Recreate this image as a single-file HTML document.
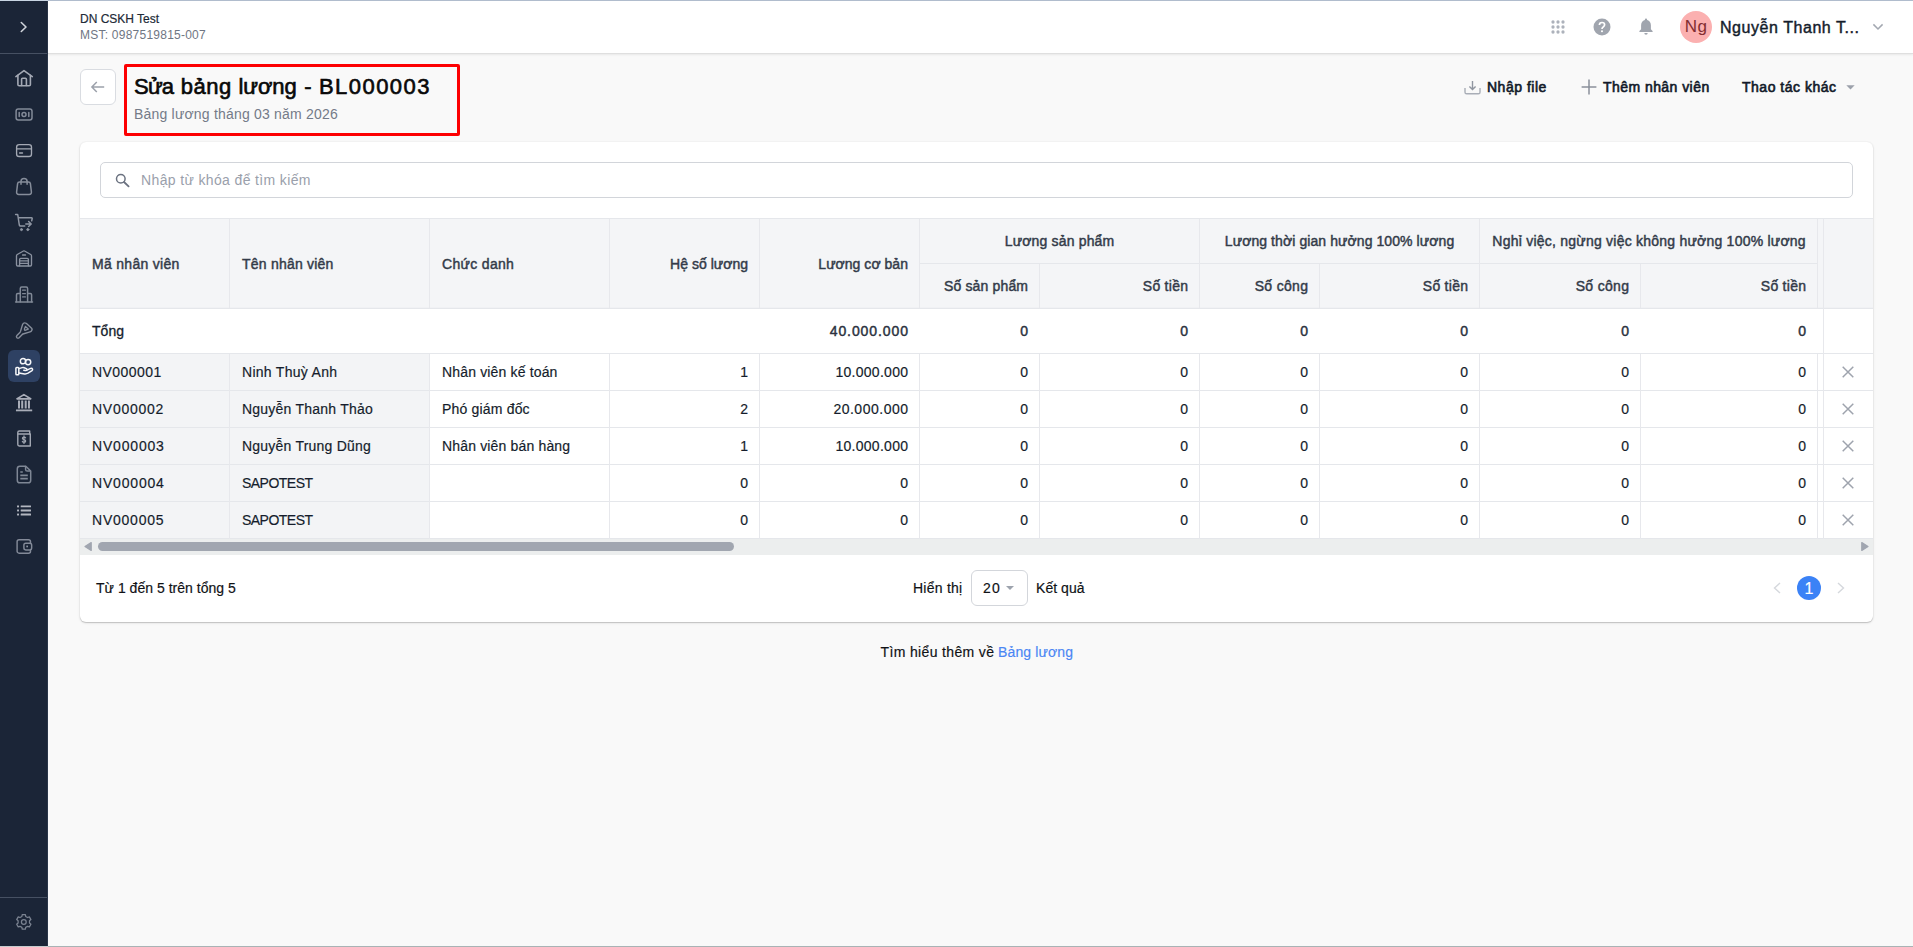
<!DOCTYPE html>
<html lang="vi">
<head>
<meta charset="utf-8">
<title>Sửa bảng lương - BL000003</title>
<style>
*{box-sizing:border-box;margin:0;padding:0}
html,body{width:1913px;height:947px;overflow:hidden;background:#f9f9f9;font-family:"Liberation Sans",sans-serif;color:#1f2937;font-size:14px}
#app{position:relative;width:1913px;height:947px;overflow:hidden}
.abs{position:absolute}
.t{position:absolute;white-space:nowrap;line-height:20px;height:20px}
.tr{text-align:right}
.tc{text-align:center}
#topline{left:0;top:0;width:1913px;height:1px;background:linear-gradient(90deg,#c9d5e3 0,#c9d5e3 48px,#b0bccd 48px)}
#botline{left:0;top:946px;width:1913px;height:1px;background:linear-gradient(90deg,#c5ccce 0,#c5ccce 48px,#a9b3b5 48px)}
#side{left:0;top:0;width:48px;height:947px;background:#1b2537;border-right:1px solid #2a3649}
#side .dv{position:absolute;left:0;width:47px;height:1px;background:#465062}
#side svg{position:absolute;left:15px;width:18px;height:18px;fill:none;stroke:#9aa1ad;stroke-width:1.5;stroke-linecap:round;stroke-linejoin:round;overflow:visible}
#active{position:absolute;left:8px;top:350px;width:32px;height:32px;border-radius:6px;background:#2e4163}
#hdr{left:48px;top:0;width:1865px;height:54px;background:#fff;border-bottom:1px solid #dfdfdf;box-shadow:0 1px 2px rgba(0,0,0,.07)}
#card{left:80px;top:142px;width:1793px;height:480px;background:#fff;border-radius:6px;box-shadow:0 1px 1px rgba(0,0,0,.15),0 1px 3px rgba(0,0,0,.1),0 0 2px rgba(0,0,0,.07)}
#search{left:100px;top:162px;width:1753px;height:36px;border:1px solid #d2d5da;border-radius:5px;background:#fff}
#back{left:80px;top:69px;width:36px;height:36px;border:1px solid #d9dce1;border-radius:6px;background:#fff}
#redbox{left:124px;top:64px;width:336px;height:72px;border:3px solid #fd0002;border-radius:2px}
.bg{position:absolute;background:#f3f4f6}
.hl{position:absolute;height:1px;background:#e5e7eb}
.vl{position:absolute;width:1px;background:#e7e8ec}
.hd{font-weight:400;color:#333b49;font-size:14px;-webkit-text-stroke:.45px #333b49}
.c{font-size:14px;color:#151d2c;-webkit-text-stroke:.18px #151d2c}
.b{font-weight:400;color:#2b3240;-webkit-text-stroke:.45px #2b3240}
.ic{position:absolute;overflow:visible}
</style>
</head>
<body>
<div id="app">
<div id="side" class="abs"><div class="dv" style="top:53px"></div><div class="dv" style="top:897px"></div><div id="active"></div><svg viewBox="0 0 18 18" style="top:18px;stroke:#cfd3da;stroke-width:1.6"><path d="M6.3 4.5 L11 9 L6.3 13.5"/></svg>
<svg viewBox="0 0 18 18" style="top:68.5px;stroke:#a4a9b4;stroke-width:1.6"><path d="M0.9 7.6 L9 1.6 L17.3 7.6"/><path d="M2.9 6.4 V15.4 Q2.9 16.7 4.2 16.7 H14.1 Q15.4 16.7 15.4 15.4 V6.4"/><path d="M6.6 16.5 V10.3 Q6.6 9.3 7.6 9.3 H10.4 Q11.4 9.3 11.4 10.3 V16.5"/></svg>
<svg viewBox="0 0 18 18" style="top:104.5px;stroke:#838a98;stroke-width:1.5"><rect x="1.1" y="4" width="15.9" height="11" rx="2.2"/><circle cx="9" cy="9.5" r="2"/><path d="M4.2 7.6 V11.4 M13.8 7.6 V11.4"/></svg>
<svg viewBox="0 0 18 18" style="top:140.5px;stroke:#a4a9b4;stroke-width:1.35"><rect x="1.6" y="3.6" width="14.9" height="11.9" rx="2.6"/><path d="M1.8 7.9 H16.3"/><path d="M4.6 12 H7.5"/></svg>
<svg viewBox="0 0 18 18" style="top:176.5px;stroke:#868d9a;stroke-width:1.5"><path d="M4.6 4.9 H13.4 Q15.2 4.9 15.4 6.7 L16.4 15 Q16.6 17.4 14.2 17.4 H3.8 Q1.4 17.4 1.6 15 L2.6 6.7 Q2.8 4.9 4.6 4.9 Z"/><path d="M6 7.2 V4.3 Q6 1.4 9 1.4 Q12.1 1.4 12.1 4.3 V7.2"/></svg>
<svg viewBox="0 0 18 18" style="top:212.5px;stroke:#8e95a2;stroke-width:1.5"><path d="M0.6 1.5 H2.4 Q2.7 1.5 2.8 2 L4.3 12 Q4.5 13 5.5 13 H9.7"/><path d="M3.8 4.8 H16.6 Q17.3 4.8 17.2 5.5 L16.7 7.8"/><path d="M10.8 11 H16 M13.6 8.5 L16.2 11 L13.6 13.5"/><circle cx="6.5" cy="16.6" r="1.05" fill="#8e95a2" stroke-width="1"/><circle cx="12.8" cy="16.6" r="1.05" fill="#8e95a2" stroke-width="1"/></svg>
<svg viewBox="0 0 18 18" style="top:248.5px;stroke:#8b92a0;stroke-width:1.35"><path d="M1.5 6.9 Q1.5 6 2.3 5.5 L8.4 2 Q9 1.7 9.6 2 L15.7 5.5 Q16.5 6 16.5 6.9 V15.8 Q16.5 17 15.3 17 H2.7 Q1.5 17 1.5 15.8 Z"/><path d="M7.6 6 H10.5"/><path d="M4.6 16.8 V10.4 Q4.6 9.3 5.7 9.3 H12.3 Q13.4 9.3 13.4 10.4 V16.8"/><path d="M4.8 11.9 H13.2 M4.8 14.4 H13.2" stroke-width="1.2"/></svg>
<svg viewBox="0 0 18 18" style="top:284.5px;stroke:#818997;stroke-width:1.5"><path d="M0.6 17 H17.5"/><path d="M5.3 16.8 V3.4 Q5.3 2 6.7 2 H11.2 Q12.6 2 12.6 3.4 V16.8"/><path d="M5.1 8.4 H2.8 Q1.5 8.4 1.5 9.7 V16.8 M12.8 8.4 H15.3 Q16.6 8.4 16.6 9.7 V16.8"/><path d="M7.6 5.2 H10.4 M7.6 8.7 H10.4 M7.6 11.9 H10.4" stroke-width="1.3"/></svg>
<svg viewBox="0 0 18 18" style="top:320.5px;stroke:#868d9a;stroke-width:1.4"><path d="M7.6 3.4 Q8.2 1.8 10 1.9 Q10.9 1.9 11.5 2.6 L16.6 7.3 Q17.8 8.6 16.2 10.2 Q15.8 10.6 15 10.8 L8 13 Q7.5 13.2 7 13.7 L4.1 16.7 Q3 17.6 1.9 16.7 Q0.9 15.7 1.9 14.5 L4.9 11.4 Q5.3 11 5.5 10.4 Z"/><path d="M10.4 5.4 L13.3 8.1 L10 9.4 Q9.3 9 9.4 8 Z" stroke-width="1.3"/></svg>
<svg viewBox="0 0 18 18" style="top:356.5px;stroke:#f6f7f9;stroke-width:1.5"><circle cx="8" cy="4.2" r="2.65"/><circle cx="13.1" cy="5.1" r="2.65"/><rect x="0.9" y="10.5" width="2.9" height="7.2" rx="0.8"/><path d="M3.9 11.6 L7.2 10.6 Q8.2 10.3 9.2 10.7 L11.4 11.6 Q12.4 12.1 11.9 13 Q11.5 13.7 10.4 13.6 L8.8 13.3"/><path d="M11.9 13.1 L15.7 11.4 Q17 11 17.5 12 Q17.9 12.9 17 13.6 L13 16.2 Q11.4 17.1 9.6 16.9 L3.9 16"/></svg>
<svg viewBox="0 0 18 18" style="top:392.5px;stroke:#a9adb8"><path d="M2.2 5.7 L8.9 1.6 L15.6 5.7 Z" stroke-width="1.6"/><path d="M1.6 5.8 H16.2" stroke-width="1.5" stroke-linecap="butt"/><path d="M0.95 17.4 H17.2" stroke-width="1.8" stroke-linecap="butt"/><path d="M4 7.4 V15.5 M7.2 7.4 V15.5 M10.7 7.4 V15.5 M13.95 7.4 V15.5" stroke-width="2" stroke-linecap="butt"/></svg>
<svg viewBox="0 0 18 18" style="top:428.5px;stroke:#a2a7b2;stroke-width:1.4"><path d="M2.8 3.6 Q2.8 2 4.4 2 H14.7 V5 H15.3 V17 H4.2 Q2.8 17 2.8 15.6 Z"/><path d="M3 5 H15" stroke-width="1.3"/><path d="M10.6 8.9 Q10.4 8 9 8 Q7.4 8 7.4 9.3 Q7.4 10.3 9 10.6 Q10.7 10.9 10.7 12.1 Q10.7 13.4 9 13.4 Q7.4 13.4 7.3 12.3 M9 6.9 V14.5" stroke-width="1.2"/></svg>
<svg viewBox="0 0 18 18" style="top:464.5px;stroke:#7f8795;stroke-width:1.5"><path d="M2.3 3.8 Q2.3 1.2 4.9 1.2 H10.8 L15.7 6 V15.2 Q15.7 17.8 13.1 17.8 H4.9 Q2.3 17.8 2.3 15.2 Z"/><path d="M10.6 1.6 V4.4 Q10.6 6 12.2 6 H15.2"/><path d="M5.3 7 H7.8 M5.3 10.3 H12.8 M5.3 13.6 H12.8" stroke-width="1.7" stroke-linecap="butt"/></svg>
<svg viewBox="0 0 18 18" style="top:500.5px;"><g fill="#b3b7c0" stroke="none"><rect x="2.05" y="4.5" width="1.95" height="1.85"/><rect x="2.05" y="8.55" width="1.95" height="1.85"/><rect x="2.05" y="12.6" width="1.95" height="1.85"/><rect x="5.7" y="4.5" width="10.3" height="1.85" rx=".3"/><rect x="5.7" y="8.55" width="10.3" height="1.85" rx=".3"/><rect x="5.7" y="12.6" width="10.3" height="1.85" rx=".3"/></g></svg>
<svg viewBox="0 0 18 18" style="top:536.5px;stroke:#838a98;stroke-width:1.45"><rect x="2.1" y="2.8" width="13.4" height="13.35" rx="2"/><path d="M16.65 8 Q16.65 6.2 14.85 6.2 H10.7 Q8.9 6.2 8.9 8 V11.1 Q8.9 12.9 10.7 12.9 H14.85 Q16.65 12.9 16.65 11.1 Z" fill="#1b2537"/><rect x="11.3" y="8.6" width="1.7" height="1.7" fill="#8e95a2" stroke="none"/></svg>
<svg viewBox="0 0 18 18" style="top:913px;stroke:#7b8391;stroke-width:1.25"><path d="M7.24 1.56 L10.36 1.56 L10.71 3.42 L12.59 4.51 L14.37 3.88 L15.93 6.58 L14.50 7.81 L14.50 9.99 L15.93 11.22 L14.37 13.92 L12.59 13.29 L10.71 14.38 L10.36 16.24 L7.24 16.24 L6.89 14.38 L5.01 13.29 L3.23 13.92 L1.67 11.22 L3.10 9.99 L3.10 7.81 L1.67 6.58 L3.23 3.88 L5.01 4.51 L6.89 3.42 Z"/><circle cx="8.8" cy="8.9" r="2.4"/></svg>
</div>
<div id="hdr" class="abs"></div>
<div class="t c" style="left:80px;top:9px;letter-spacing:-0.004px;font-size:12px;color:#222b38">DN CSKH Test</div>
<div class="t c" style="left:80px;top:25px;letter-spacing:0.237px;font-size:12px;color:#6f7683;-webkit-text-stroke:0">MST: 0987519815-007</div>
<div class="t c" style="left:1720px;top:18px;letter-spacing:0.552px;font-size:16px;color:#141c2b;-webkit-text-stroke:.42px #141c2b">Nguyễn Thanh T...</div>
<div id="back" class="abs"></div>
<div id="redbox" class="abs"></div>
<div class="t c" style="left:134.0px;top:77px;letter-spacing:-0.77px;font-size:22px;color:#0a0a0a;line-height:28px;height:28px;top:73.4px;-webkit-text-stroke:.62px #050505;">Sửa</div>
<div class="t c" style="left:180.8px;top:77px;letter-spacing:0.516px;font-size:22px;color:#0a0a0a;line-height:28px;height:28px;top:73.4px;-webkit-text-stroke:.62px #050505;">bảng</div>
<div class="t c" style="left:238.4px;top:77px;letter-spacing:-0.054px;font-size:22px;color:#0a0a0a;line-height:28px;height:28px;top:73.4px;-webkit-text-stroke:.62px #050505;">lương</div>
<div class="t c" style="left:304.2px;top:77px;font-size:22px;color:#0a0a0a;line-height:28px;height:28px;top:73.4px;-webkit-text-stroke:.62px #050505;">-</div>
<div class="t c" style="left:319.0px;top:77px;letter-spacing:1.439px;font-size:22px;color:#0a0a0a;line-height:28px;height:28px;top:73.4px;-webkit-text-stroke:.62px #050505;">BL000003</div>
<div class="t c" style="left:134px;top:104px;letter-spacing:0.197px;color:#747b88;-webkit-text-stroke:0">Bảng lương tháng 03 năm 2026</div>
<div class="t hd" style="left:1487px;top:77px;letter-spacing:0.504px;color:#121a29;-webkit-text-stroke:.62px #121a29">Nhập file</div>
<div class="t hd" style="left:1603px;top:77px;letter-spacing:0.446px;color:#121a29;-webkit-text-stroke:.62px #121a29">Thêm nhân viên</div>
<div class="t hd" style="left:1742px;top:77px;letter-spacing:0.505px;color:#121a29;-webkit-text-stroke:.62px #121a29">Thao tác khác</div>
<div id="card" class="abs"></div>
<div id="search" class="abs"></div>
<div class="t c" style="left:141px;top:170px;letter-spacing:0.365px;color:#9aa0ab;-webkit-text-stroke:0">Nhập từ khóa để tìm kiếm</div>
<div class="bg" style="left:80px;top:218px;width:1793px;height:91px;background:#f4f5f7"></div>
<div class="bg" style="left:80px;top:354px;width:349px;height:185px"></div>
<div class="abs" style="left:80px;top:539px;width:1793px;height:16px;background:#eceeee"></div>
<div class="abs" style="left:98px;top:542px;width:636px;height:9px;border-radius:5px;background:#a1a6b0"></div>
<svg class="ic" style="left:84px;top:542px" width="8" height="9" viewBox="0 0 8 9"><path d="M7.2 0.6 L1 4.5 L7.2 8.4 Z" fill="#a1a6b0" stroke="#a1a6b0" stroke-width="1.3" stroke-linejoin="round"/></svg>
<svg class="ic" style="left:1861px;top:542px" width="8" height="9" viewBox="0 0 8 9"><path d="M0.8 0.6 L7 4.5 L0.8 8.4 Z" fill="#a1a6b0" stroke="#a1a6b0" stroke-width="1.3" stroke-linejoin="round"/></svg>
<div class="hl" style="left:80px;top:218px;width:1793px"></div>
<div class="hl" style="left:80px;top:308px;width:1793px"></div>
<div class="hl" style="left:80px;top:307px;width:1793px;background:#f0f1f4"></div>
<div class="hl" style="left:80px;top:353px;width:1793px"></div>
<div class="hl" style="left:80px;top:390px;width:1793px"></div>
<div class="hl" style="left:80px;top:427px;width:1793px"></div>
<div class="hl" style="left:80px;top:464px;width:1793px"></div>
<div class="hl" style="left:80px;top:501px;width:1793px"></div>
<div class="hl" style="left:80px;top:538px;width:1793px"></div>
<div class="hl" style="left:919px;top:263px;width:898px"></div>
<div class="vl" style="left:229px;top:219px;height:89px"></div>
<div class="vl" style="left:229px;top:354px;height:185px"></div>
<div class="vl" style="left:429px;top:219px;height:89px"></div>
<div class="vl" style="left:429px;top:354px;height:185px"></div>
<div class="vl" style="left:609px;top:219px;height:89px"></div>
<div class="vl" style="left:609px;top:354px;height:185px"></div>
<div class="vl" style="left:759px;top:219px;height:89px"></div>
<div class="vl" style="left:759px;top:354px;height:185px"></div>
<div class="vl" style="left:919px;top:219px;height:89px"></div>
<div class="vl" style="left:919px;top:354px;height:185px"></div>
<div class="vl" style="left:1039px;top:264px;height:44px"></div>
<div class="vl" style="left:1039px;top:354px;height:185px"></div>
<div class="vl" style="left:1199px;top:219px;height:89px"></div>
<div class="vl" style="left:1199px;top:354px;height:185px"></div>
<div class="vl" style="left:1319px;top:264px;height:44px"></div>
<div class="vl" style="left:1319px;top:354px;height:185px"></div>
<div class="vl" style="left:1479px;top:219px;height:89px"></div>
<div class="vl" style="left:1479px;top:354px;height:185px"></div>
<div class="vl" style="left:1640px;top:264px;height:44px"></div>
<div class="vl" style="left:1640px;top:354px;height:185px"></div>
<div class="vl" style="left:1817px;top:219px;height:89px"></div>
<div class="vl" style="left:1817px;top:354px;height:185px"></div>
<div class="vl" style="left:1823px;top:219px;height:320px"></div>
<div class="t hd" style="left:92px;top:254px;letter-spacing:0.294px;">Mã nhân viên</div>
<div class="t hd" style="left:242px;top:254px;letter-spacing:0.222px;">Tên nhân viên</div>
<div class="t hd" style="left:442px;top:254px;letter-spacing:0.323px;">Chức danh</div>
<div class="t tr hd" style="left:448.02px;width:300px;top:254px;letter-spacing:0.02px;">Hệ số lương</div>
<div class="t tr hd" style="left:608.04px;width:300px;top:254px;letter-spacing:0.042px;">Lương cơ bản</div>
<div class="t tc hd" style="left:759.58px;width:600px;top:231px;letter-spacing:0.162px;">Lương sản phẩm</div>
<div class="t tc hd" style="left:1039.54px;width:600px;top:231px;letter-spacing:0.085px;">Lương thời gian hưởng 100% lương</div>
<div class="t tc hd" style="left:1349.12px;width:600px;top:231px;letter-spacing:0.232px;">Nghỉ việc, ngừng việc không hưởng 100% lương</div>
<div class="t tr hd" style="left:728.15px;width:300px;top:276px;letter-spacing:0.15px;">Số sản phẩm</div>
<div class="t tr hd" style="left:888.27px;width:300px;top:276px;letter-spacing:0.268px;">Số tiền</div>
<div class="t tr hd" style="left:1008.32px;width:300px;top:276px;letter-spacing:0.321px;">Số công</div>
<div class="t tr hd" style="left:1168.27px;width:300px;top:276px;letter-spacing:0.268px;">Số tiền</div>
<div class="t tr hd" style="left:1329.32px;width:300px;top:276px;letter-spacing:0.321px;">Số công</div>
<div class="t tr hd" style="left:1506.27px;width:300px;top:276px;letter-spacing:0.268px;">Số tiền</div>
<div class="t c" style="left:92px;top:321px;letter-spacing:0.059px;-webkit-text-stroke:.3px #151d2c">Tổng</div>
<div class="t tr c b" style="left:608.91px;width:300px;top:321px;letter-spacing:0.914px;">40.000.000</div>
<div class="t tr c b" style="left:728.0px;width:300px;top:321px;">0</div>
<div class="t tr c b" style="left:888.0px;width:300px;top:321px;">0</div>
<div class="t tr c b" style="left:1008.0px;width:300px;top:321px;">0</div>
<div class="t tr c b" style="left:1168.0px;width:300px;top:321px;">0</div>
<div class="t tr c b" style="left:1329.0px;width:300px;top:321px;">0</div>
<div class="t tr c b" style="left:1506.0px;width:300px;top:321px;">0</div>
<div class="t c" style="left:92px;top:362px;letter-spacing:0.447px;">NV000001</div>
<div class="t c" style="left:242px;top:362px;letter-spacing:0.284px;">Ninh Thuỳ Anh</div>
<div class="t c" style="left:442px;top:362px;letter-spacing:0.159px;">Nhân viên kế toán</div>
<div class="t tr c" style="left:448.0px;width:300px;top:362px;">1</div>
<div class="t tr c" style="left:608.28px;width:300px;top:362px;letter-spacing:0.28px;">10.000.000</div>
<div class="t tr c" style="left:728.0px;width:300px;top:362px;">0</div>
<div class="t tr c" style="left:888.0px;width:300px;top:362px;">0</div>
<div class="t tr c" style="left:1008.0px;width:300px;top:362px;">0</div>
<div class="t tr c" style="left:1168.0px;width:300px;top:362px;">0</div>
<div class="t tr c" style="left:1329.0px;width:300px;top:362px;">0</div>
<div class="t tr c" style="left:1506.0px;width:300px;top:362px;">0</div>
<svg class="ic" style="left:1842px;top:366px" width="12" height="12" viewBox="0 0 12 12"><path d="M0.7 0.8 L11.3 11.2 M11.3 0.8 L0.7 11.2" stroke="#9ea3ad" stroke-width="1.5" fill="none"/></svg>
<div class="t c" style="left:92px;top:399px;letter-spacing:0.733px;">NV000002</div>
<div class="t c" style="left:242px;top:399px;letter-spacing:0.229px;">Nguyễn Thanh Thảo</div>
<div class="t c" style="left:442px;top:399px;letter-spacing:0.181px;">Phó giám đốc</div>
<div class="t tr c" style="left:448.0px;width:300px;top:399px;">2</div>
<div class="t tr c" style="left:608.5px;width:300px;top:399px;letter-spacing:0.502px;">20.000.000</div>
<div class="t tr c" style="left:728.0px;width:300px;top:399px;">0</div>
<div class="t tr c" style="left:888.0px;width:300px;top:399px;">0</div>
<div class="t tr c" style="left:1008.0px;width:300px;top:399px;">0</div>
<div class="t tr c" style="left:1168.0px;width:300px;top:399px;">0</div>
<div class="t tr c" style="left:1329.0px;width:300px;top:399px;">0</div>
<div class="t tr c" style="left:1506.0px;width:300px;top:399px;">0</div>
<svg class="ic" style="left:1842px;top:403px" width="12" height="12" viewBox="0 0 12 12"><path d="M0.7 0.8 L11.3 11.2 M11.3 0.8 L0.7 11.2" stroke="#9ea3ad" stroke-width="1.5" fill="none"/></svg>
<div class="t c" style="left:92px;top:436px;letter-spacing:0.818px;">NV000003</div>
<div class="t c" style="left:242px;top:436px;letter-spacing:0.218px;">Nguyễn Trung Dũng</div>
<div class="t c" style="left:442px;top:436px;letter-spacing:0.163px;">Nhân viên bán hàng</div>
<div class="t tr c" style="left:448.0px;width:300px;top:436px;">1</div>
<div class="t tr c" style="left:608.28px;width:300px;top:436px;letter-spacing:0.28px;">10.000.000</div>
<div class="t tr c" style="left:728.0px;width:300px;top:436px;">0</div>
<div class="t tr c" style="left:888.0px;width:300px;top:436px;">0</div>
<div class="t tr c" style="left:1008.0px;width:300px;top:436px;">0</div>
<div class="t tr c" style="left:1168.0px;width:300px;top:436px;">0</div>
<div class="t tr c" style="left:1329.0px;width:300px;top:436px;">0</div>
<div class="t tr c" style="left:1506.0px;width:300px;top:436px;">0</div>
<svg class="ic" style="left:1842px;top:440px" width="12" height="12" viewBox="0 0 12 12"><path d="M0.7 0.8 L11.3 11.2 M11.3 0.8 L0.7 11.2" stroke="#9ea3ad" stroke-width="1.5" fill="none"/></svg>
<div class="t c" style="left:92px;top:473px;letter-spacing:0.818px;">NV000004</div>
<div class="t c" style="left:242px;top:473px;letter-spacing:-0.527px;">SAPOTEST</div>
<div class="t tr c" style="left:448.0px;width:300px;top:473px;">0</div>
<div class="t tr c" style="left:608.0px;width:300px;top:473px;">0</div>
<div class="t tr c" style="left:728.0px;width:300px;top:473px;">0</div>
<div class="t tr c" style="left:888.0px;width:300px;top:473px;">0</div>
<div class="t tr c" style="left:1008.0px;width:300px;top:473px;">0</div>
<div class="t tr c" style="left:1168.0px;width:300px;top:473px;">0</div>
<div class="t tr c" style="left:1329.0px;width:300px;top:473px;">0</div>
<div class="t tr c" style="left:1506.0px;width:300px;top:473px;">0</div>
<svg class="ic" style="left:1842px;top:477px" width="12" height="12" viewBox="0 0 12 12"><path d="M0.7 0.8 L11.3 11.2 M11.3 0.8 L0.7 11.2" stroke="#9ea3ad" stroke-width="1.5" fill="none"/></svg>
<div class="t c" style="left:92px;top:510px;letter-spacing:0.775px;">NV000005</div>
<div class="t c" style="left:242px;top:510px;letter-spacing:-0.527px;">SAPOTEST</div>
<div class="t tr c" style="left:448.0px;width:300px;top:510px;">0</div>
<div class="t tr c" style="left:608.0px;width:300px;top:510px;">0</div>
<div class="t tr c" style="left:728.0px;width:300px;top:510px;">0</div>
<div class="t tr c" style="left:888.0px;width:300px;top:510px;">0</div>
<div class="t tr c" style="left:1008.0px;width:300px;top:510px;">0</div>
<div class="t tr c" style="left:1168.0px;width:300px;top:510px;">0</div>
<div class="t tr c" style="left:1329.0px;width:300px;top:510px;">0</div>
<div class="t tr c" style="left:1506.0px;width:300px;top:510px;">0</div>
<svg class="ic" style="left:1842px;top:514px" width="12" height="12" viewBox="0 0 12 12"><path d="M0.7 0.8 L11.3 11.2 M11.3 0.8 L0.7 11.2" stroke="#9ea3ad" stroke-width="1.5" fill="none"/></svg>
<div class="t c" style="left:96px;top:578px;letter-spacing:0.021px;color:#101216;-webkit-text-stroke:.18px #101216">Từ 1 đến 5 trên tổng 5</div>
<div class="t c" style="left:913px;top:578px;letter-spacing:0.247px;color:#101216;-webkit-text-stroke:.18px #101216">Hiển thị</div>
<div class="abs" style="left:971px;top:570px;width:57px;height:36px;border:1px solid #d3d6db;border-radius:6px;background:#fff"></div>
<div class="t c" style="left:983px;top:578px;letter-spacing:1.222px;color:#101216;-webkit-text-stroke:.18px #101216">20</div>
<svg class="ic" style="left:1005px;top:585px" width="10" height="6" viewBox="0 0 10 6"><path d="M1 1 L9 1 L5 5 Z" fill="#9da3ad"/></svg>
<div class="t c" style="left:1036px;top:578px;letter-spacing:0.039px;color:#101216;-webkit-text-stroke:.18px #101216">Kết quả</div>
<div class="abs" style="left:1797px;top:576px;width:24px;height:24px;border-radius:12px;background:#3b82f6"></div>
<div class="t tc c" style="left:1509.0px;width:600px;top:578px;color:#fff;font-size:16px;-webkit-text-stroke:.2px #fff;margin-top:.6px">1</div>
<svg class="ic" style="left:1773px;top:582px" width="8" height="12" viewBox="0 0 8 12"><path d="M7 1 L1.5 6 L7 11" stroke="#d5d8dd" stroke-width="1.4" fill="none"/></svg>
<svg class="ic" style="left:1837px;top:582px" width="8" height="12" viewBox="0 0 8 12"><path d="M1 1 L6.5 6 L1 11" stroke="#d5d8dd" stroke-width="1.4" fill="none"/></svg>
<div class="t c" style="left:880.5px;top:642px;letter-spacing:0.356px;color:#101216;-webkit-text-stroke:.18px #101216">Tìm hiểu thêm về</div>
<div class="t c" style="left:998px;top:642px;letter-spacing:0.13px;color:#4a86f4;-webkit-text-stroke:.15px #4a86f4">Bảng lương</div>
<svg class="ic" style="left:1551px;top:20px" width="14" height="14" viewBox="0 0 14 14" fill="#adb2bb"><circle cx="2" cy="2" r="1.65"/><circle cx="2" cy="7" r="1.65"/><circle cx="2" cy="12" r="1.65"/><circle cx="7" cy="2" r="1.65"/><circle cx="7" cy="7" r="1.65"/><circle cx="7" cy="12" r="1.65"/><circle cx="12" cy="2" r="1.65"/><circle cx="12" cy="7" r="1.65"/><circle cx="12" cy="12" r="1.65"/></svg>
<svg class="ic" style="left:1593px;top:18px" width="18" height="18" viewBox="0 0 18 18"><circle cx="9" cy="9" r="8.5" fill="#a0a5ae"/><path d="M6.4 7.1 Q6.4 4.5 9 4.5 Q11.6 4.5 11.6 6.8 Q11.6 8.1 10.2 8.9 Q9 9.6 9 10.9" fill="none" stroke="#fff" stroke-width="1.7"/><circle cx="9" cy="13.3" r="1.05" fill="#fff"/></svg>
<svg class="ic" style="left:1638px;top:18px" width="16" height="18" viewBox="0 0 16 18" fill="#a0a5ae"><path d="M8 0.6 Q9.2 0.6 9.2 1.9 Q12.9 3 12.9 7.2 V11.2 L14.6 13 V13.9 H1.4 V13 L3.1 11.2 V7.2 Q3.1 3 6.8 1.9 Q6.8 0.6 8 0.6 Z"/><path d="M6.3 15 H9.7 Q9.7 16.8 8 16.8 Q6.3 16.8 6.3 15 Z"/></svg>
<div class="abs" style="left:1680px;top:11px;width:32px;height:32px;border-radius:16px;background:#fbb0b0"></div>
<div class="t tc" style="left:1680px;width:32px;top:17px;font-size:17px;color:#822d31;letter-spacing:.3px;-webkit-text-stroke:0">Ng</div>
<svg class="ic" style="left:1872px;top:23px" width="12" height="8" viewBox="0 0 12 8"><path d="M1.4 1.4 L6 6 L10.6 1.4" fill="none" stroke="#a3a8b1" stroke-width="1.5"/></svg>
<svg class="ic" style="left:91px;top:81px" width="14" height="12" viewBox="0 0 14 12"><path d="M13.2 6 H1.2 M5.8 1 L0.9 6 L5.8 11" fill="none" stroke="#9ca1ab" stroke-width="1.5"/></svg>
<svg class="ic" style="left:114.5px;top:172.5px" width="15" height="15" viewBox="0 0 15 15"><circle cx="5.8" cy="5.8" r="4.3" fill="none" stroke="#6b7280" stroke-width="1.5"/><path d="M9 9 L13.6 13.4" stroke="#6b7280" stroke-width="1.8" stroke-linecap="round"/></svg>
<svg class="ic" style="left:1464px;top:80px" width="17" height="15" viewBox="0 0 17 15" fill="none" stroke="#a9aeb7" stroke-width="1.4"><path d="M1 8 V12.2 Q1 13.8 2.6 13.8 H14.4 Q16 13.8 16 12.2 V8"/><path d="M8.5 1 V9.4 M5.4 6.5 L8.5 9.6 L11.6 6.5" stroke="#9096a0"/></svg>
<svg class="ic" style="left:1581px;top:79px" width="16" height="16" viewBox="0 0 16 16"><path d="M8 0.6 V15.4 M0.6 8 H15.4" stroke="#8a909b" stroke-width="1.5"/></svg>
<svg class="ic" style="left:1846px;top:85px" width="9" height="5" viewBox="0 0 9 5"><path d="M0.3 0.3 H8.7 L4.5 4.6 Z" fill="#9ca1ab"/></svg>
<div id="topline" class="abs"></div>
<div id="botline" class="abs"></div>
</div>
</body>
</html>
